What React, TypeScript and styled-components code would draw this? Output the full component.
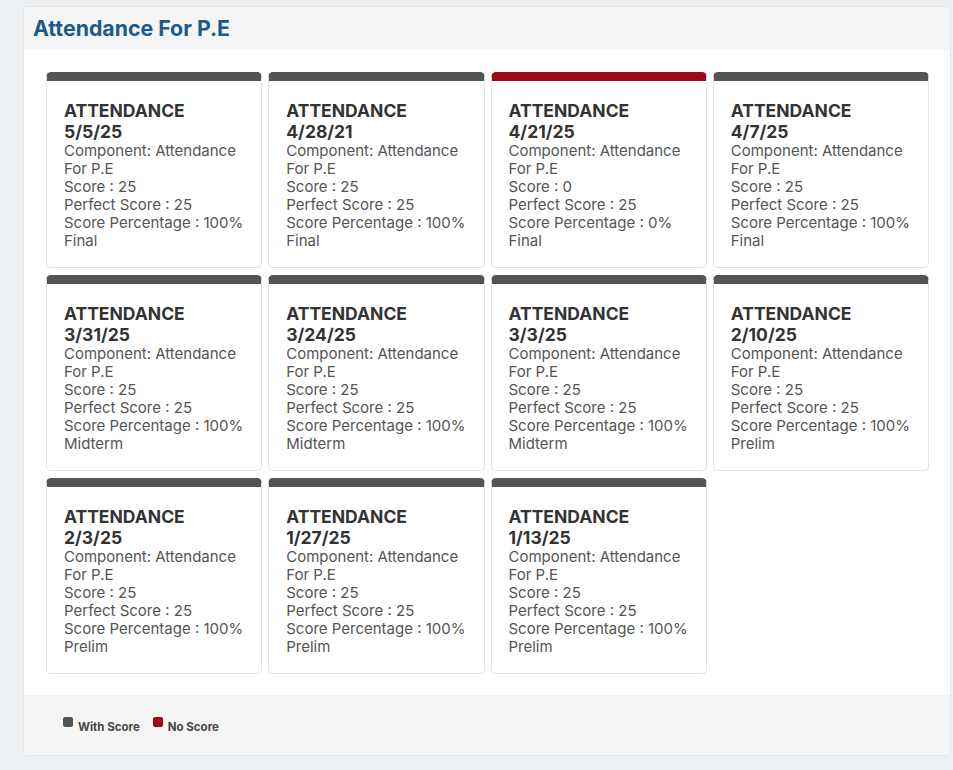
import React from "react";
import styled, { createGlobalStyle } from "styled-components";

const Global = createGlobalStyle`
  html, body { margin: 0; padding: 0; background: #edf1f4; }
  body { font-family: Inter, "Noto Sans", Arial, sans-serif; }
  * { box-sizing: border-box; }
`;

const Page = styled.div`
  padding: 6px 2px 14px 23px;
`;

const Panel = styled.section`
  background: #ffffff;
  border: 1px solid #e3e6e9;
  border-radius: 4px;
  overflow: hidden;
`;

const Header = styled.header`
  height: 43px;
  background: #f5f5f5;
  display: flex;
  align-items: center;
  padding-left: 9px;
  padding-bottom: 2px;
`;

const Title = styled.h1`
  margin: 0;
  font-size: 21.3px;
  font-weight: 700;
  color: #1b5b8b;
`;

const Grid = styled.div`
  display: grid;
  grid-template-columns: repeat(4, 1fr);
  column-gap: 6px;
  row-gap: 7px;
  padding: 22px 21px 21px 22px;
`;

const Card = styled.div<{ $noScore?: boolean }>`
  border: 1px solid #e2e2e2;
  border-top: 9px solid ${(p) => (p.$noScore ? "#9c0b1b" : "#535553")};
  border-radius: 5px;
  background: #fff;
  padding: 19px 17px 16px 17px;
  min-height: 196px;
`;

const CardTitle = styled.div`
  font-size: 17.5px;
  font-weight: 700;
  line-height: 21px;
  color: #333333;
`;

const Line = styled.div`
  font-size: 15px;
  line-height: 18px;
  color: #555555;
`;

const Footer = styled.footer`
  height: 60px;
  background: #f5f5f5;
  display: flex;
  align-items: center;
  gap: 13px;
  padding-left: 39px;
  padding-top: 4px;
`;

const LegendItem = styled.div`
  display: flex;
  align-items: flex-start;
  gap: 5px;
  font-size: 11.5px;
  font-weight: 700;
  color: #444;
`;

const Swatch = styled.span<{ $color: string }>`
  display: inline-block;
  width: 10px;
  height: 10px;
  border-radius: 2px;
  background: ${(p) => p.$color};
  margin-top: -3px;
`;

type Rec = { date: string; score: number; pct: string; term: string };

const records: Rec[] = [
  { date: "5/5/25", score: 25, pct: "100%", term: "Final" },
  { date: "4/28/21", score: 25, pct: "100%", term: "Final" },
  { date: "4/21/25", score: 0, pct: "0%", term: "Final" },
  { date: "4/7/25", score: 25, pct: "100%", term: "Final" },
  { date: "3/31/25", score: 25, pct: "100%", term: "Midterm" },
  { date: "3/24/25", score: 25, pct: "100%", term: "Midterm" },
  { date: "3/3/25", score: 25, pct: "100%", term: "Midterm" },
  { date: "2/10/25", score: 25, pct: "100%", term: "Prelim" },
  { date: "2/3/25", score: 25, pct: "100%", term: "Prelim" },
  { date: "1/27/25", score: 25, pct: "100%", term: "Prelim" },
  { date: "1/13/25", score: 25, pct: "100%", term: "Prelim" },
];

export default function App() {
  return (
    <Page>
      <Global />
      <Panel>
        <Header>
          <Title>Attendance For P.E</Title>
        </Header>
        <Grid>
          {records.map((r) => (
            <Card key={r.date} $noScore={r.score === 0}>
              <CardTitle>ATTENDANCE</CardTitle>
              <CardTitle>{r.date}</CardTitle>
              <Line>Component: Attendance For P.E</Line>
              <Line>Score : {r.score}</Line>
              <Line>Perfect Score : 25</Line>
              <Line>Score Percentage : {r.pct}</Line>
              <Line>{r.term}</Line>
            </Card>
          ))}
        </Grid>
        <Footer>
          <LegendItem>
            <Swatch $color="#535553" />
            With Score
          </LegendItem>
          <LegendItem>
            <Swatch $color="#9c0b1b" />
            No Score
          </LegendItem>
        </Footer>
      </Panel>
    </Page>
  );
}
